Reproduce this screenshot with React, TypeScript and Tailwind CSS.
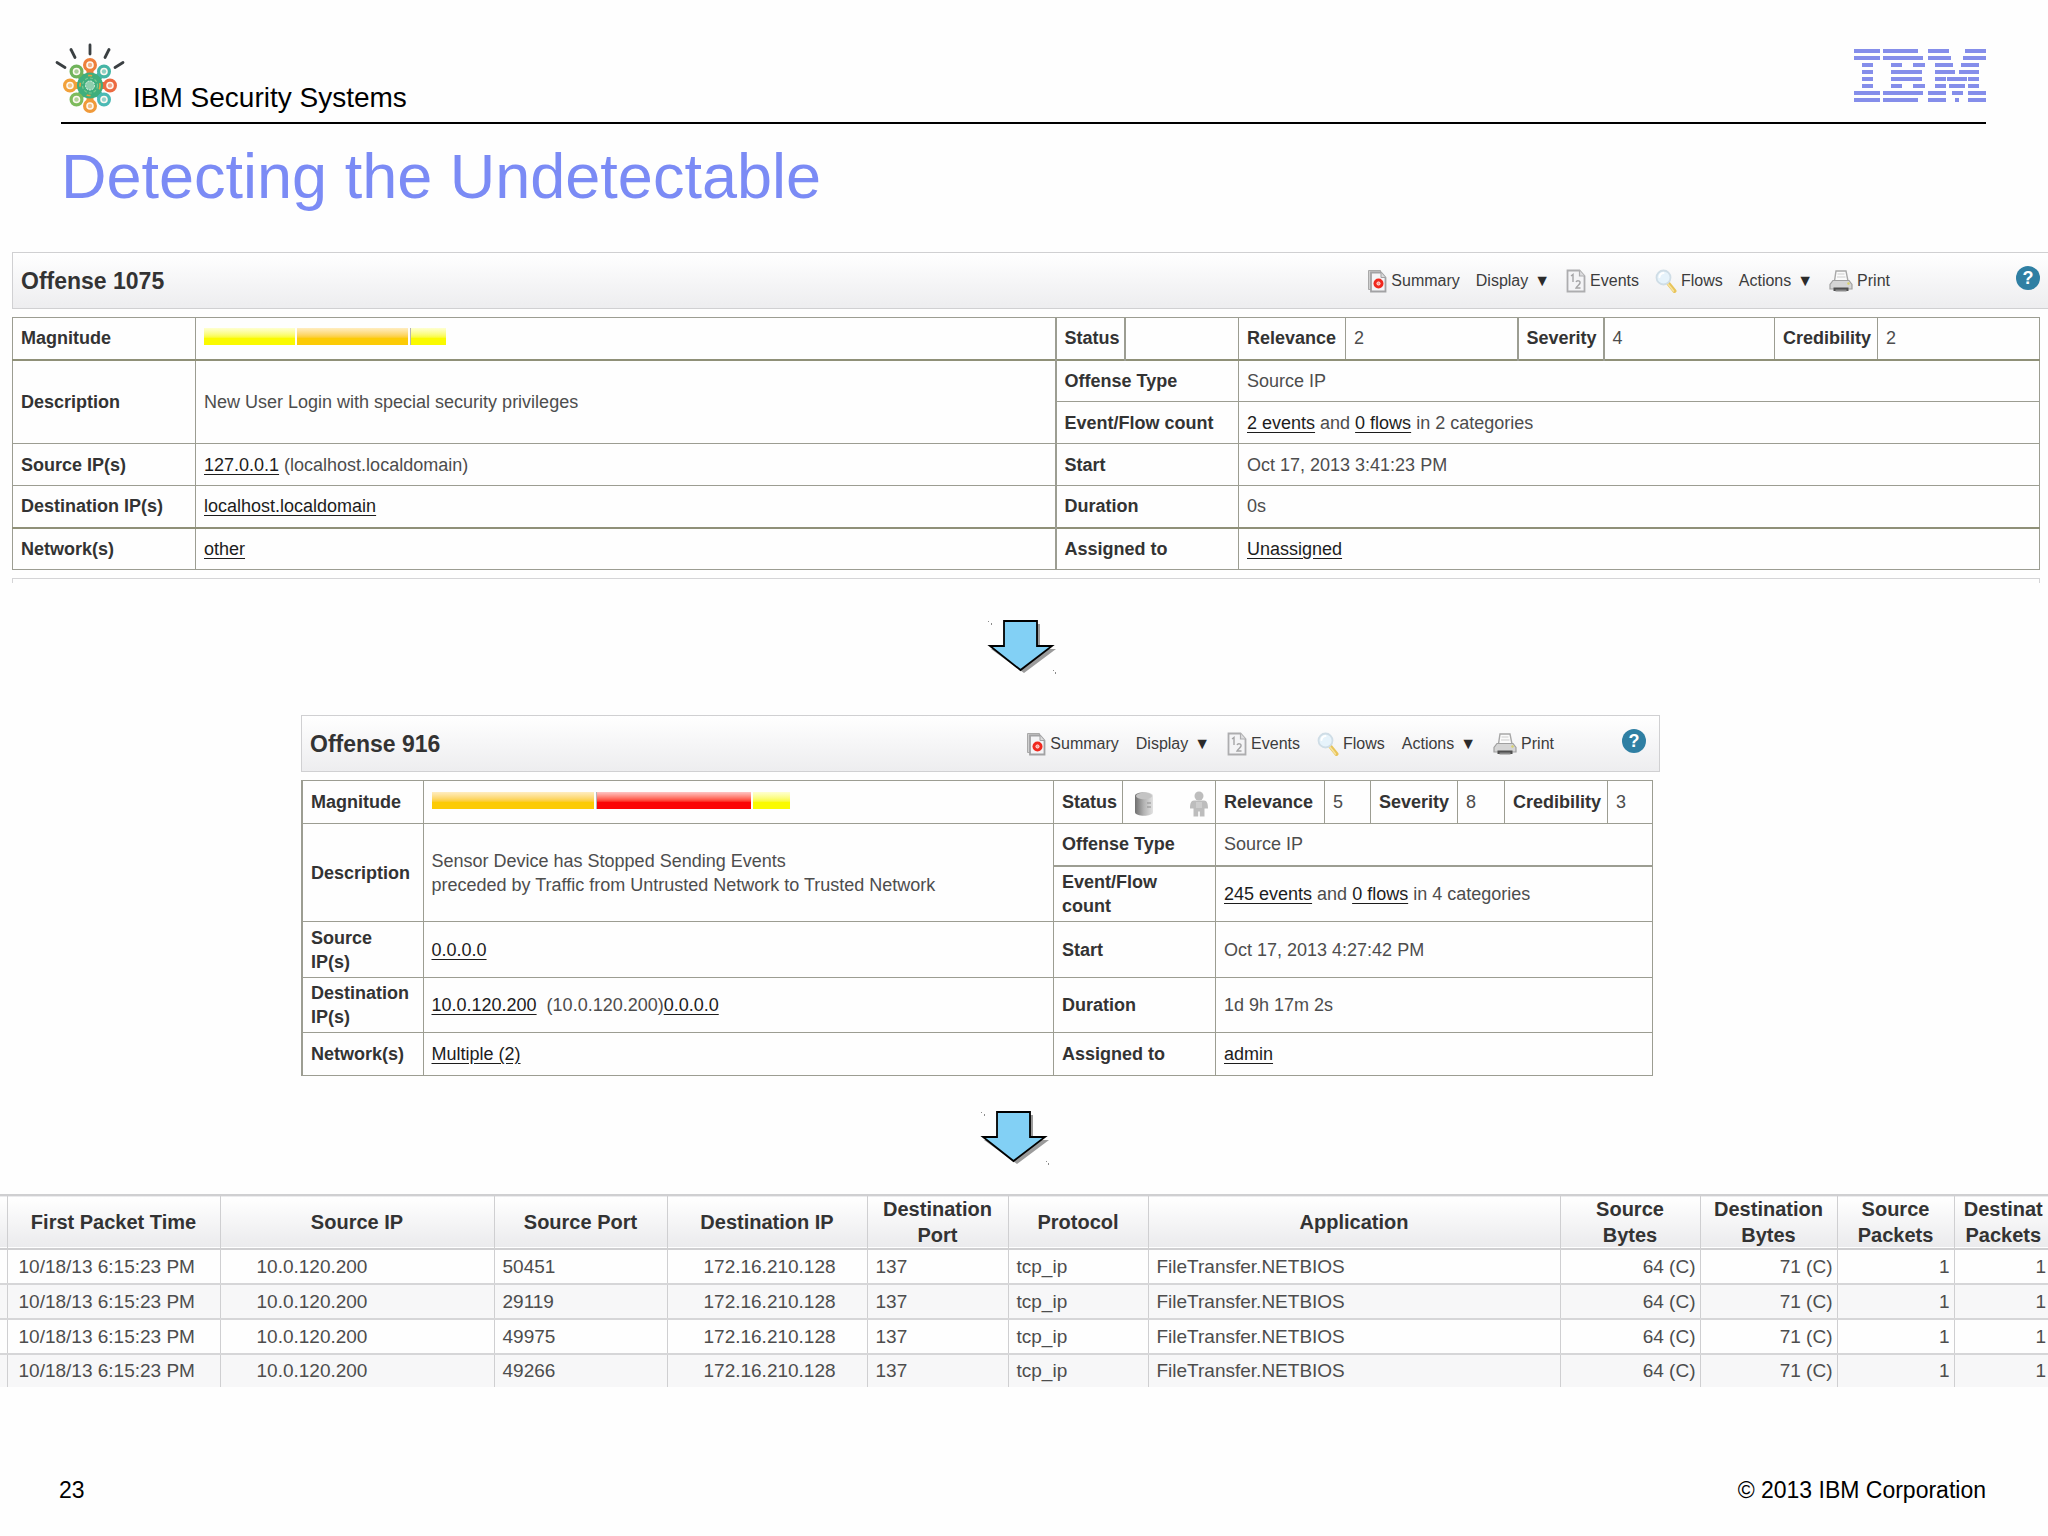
import React from "react";
import clsx from "clsx";

const SummaryIcon = () => (
  <svg width="20" height="24" viewBox="0 0 20 24" fill="none">
    <path d="M1.5 1.5h12v19h-12z" fill="#cfcfcf" stroke="#a9a9a9" />
    <path d="M4 3.5h10l4.5 5v14H4z" fill="#f4f4f6" stroke="#a2a2a4" strokeWidth="1.8" />
    <path d="M14 3.5v5h4.5" fill="#dcdcdc" stroke="#a2a2a4" />
    <circle cx="11.5" cy="14.5" r="5" fill="#f0281e" />
    <circle cx="11.5" cy="14.5" r="1.6" fill="#ff9a90" stroke="#fff" strokeWidth="0.8" />
  </svg>
);

const EventsIcon = () => (
  <svg width="20" height="24" viewBox="0 0 20 24" fill="none">
    <path d="M1.5 1.5h12l5 5.5v15.5h-17z" fill="#f4f4f6" stroke="#adadaf" strokeWidth="1.8" />
    <path d="M13.5 1.5v5.5h5" fill="#dedee0" stroke="#adadaf" strokeWidth="1.2" />
    <path d="M5 7l2-1.5v7.5" stroke="#a5a5a7" strokeWidth="1.4" />
    <path d="M10 13c1-2 4.500-1.500 4 1-.3 1.500-3 3-4 5h4.500" stroke="#a5a5a7" strokeWidth="1.4" />
  </svg>
);

const FlowsIcon = () => (
  <svg width="22" height="24" viewBox="0 0 22 24" fill="none">
    <path d="M13 14l6.5 8" stroke="#e8c45a" strokeWidth="4" strokeLinecap="round" />
    <path d="M12.5 14.5l6 7.5" stroke="#f7e3a0" strokeWidth="1.4" strokeLinecap="round" />
    <circle cx="8.5" cy="8.5" r="7" fill="#e6f3fb" stroke="#cfdde6" strokeWidth="1.8" />
    <path d="M4.5 8a4.5 4.5 0 0 1 4-4" stroke="#fff" strokeWidth="2" strokeLinecap="round" />
  </svg>
);

const PrintIcon = () => (
  <svg width="24" height="24" viewBox="0 0 24 24" fill="none">
    <path d="M7 2h10l2 10H5.5z" fill="#fbfbfb" stroke="#a8a8a8" strokeWidth="1.4" />
    <path d="M8.5 5h7M8 8h8.500" stroke="#cdcdcd" />
    <path d="M4 11.5h16l3 4v4.5H1v-4.5z" fill="#d5d5d5" stroke="#a0a0a0" strokeWidth="1.2" />
    <path d="M4.5 18.5h15v3.5h-15z" fill="#4f4f4f" />
    <path d="M6.5 20.5h11v2h-11z" fill="#8a8a8a" />
    <circle cx="19.5" cy="14.5" r="1.2" fill="#d9d36a" />
  </svg>
);

const DatabaseIcon = () => (
  <svg width="20" height="26" viewBox="0 0 20 26">
    <defs>
      <linearGradient id="cyl" x1="0" x2="1" y1="0" y2="0">
        <stop offset="0" stopColor="#6f6f6f" />
        <stop offset="0.5" stopColor="#b4b4b4" />
        <stop offset="1" stopColor="#e2e2e2" />
      </linearGradient>
    </defs>
    <path d="M1 5c0-5 18-5 18 0v16c0 5-18 5-18 0z" fill="url(#cyl)" />
    <ellipse cx="10" cy="5" rx="8" ry="3.2" fill="#c4c4c4" />
    <path d="M13 12h4M13 16h4" stroke="#8f8f8f" />
  </svg>
);

const PersonIcon = () => (
  <svg width="20" height="26" viewBox="0 0 20 26" fill="#bdbdbd">
    <circle cx="10" cy="5" r="4.5" />
    <path d="M5 9.5h10c3 0 4 3 4 8h-3.5v8h-4.700v-5h-1.600v5H4.500v-8H1c0-5 1-8 4-8z" />
    <path d="M7 11h6v6H7z" fill="#cdcdcd" />
  </svg>
);

const rays = [
  "M57 63.5l8 5",
  "M71 50.5l4 8",
  "M90 46v9",
  "M109 50.5l-4 8",
  "M123 63.5l-8 5",
];

const nodes = [
  { x: 90, y: 66, color: "#ee7f3b" },
  { x: 76.5, y: 72.5, color: "#6fb35a" },
  { x: 104, y: 72.5, color: "#45b5a5" },
  { x: 70, y: 86.5, color: "#f2a13a" },
  { x: 110, y: 86.5, color: "#ec6b42" },
  { x: 76.5, y: 100.5, color: "#7dbb5c" },
  { x: 104, y: 100.5, color: "#4bb9b4" },
  { x: 90, y: 107, color: "#f09a3a" },
];

const SecurityLogo = () => (
  <svg width="72" height="72" viewBox="54 43 72 72" fill="none">
    {rays.map((d) => (
      <path key={d} d={d} stroke="#3a3f42" strokeWidth="2.8" strokeLinecap="round" />
    ))}
    {nodes.map((n) => (
      <path
        key={`${n.x}-${n.y}`}
        d={`M90 86.5L${n.x} ${n.y}`}
        stroke={n.color}
        strokeWidth="7"
      />
    ))}
    <circle cx="90" cy="86.5" r="13" fill="#3fae7c" />
    <circle cx="90" cy="86.5" r="10" stroke="#e9a13c" strokeWidth="1.6" strokeDasharray="4 11" />
    <circle cx="90" cy="86.5" r="7.5" stroke="#7cc98f" strokeWidth="1.2" strokeDasharray="3 2" />
    <circle cx="90" cy="86.5" r="4.5" fill="#8fd0ae" stroke="#e3f5ec" strokeDasharray="2 1" />
    {nodes.map((n) => (
      <g key={`${n.x}-${n.y}`}>
        <circle cx={n.x} cy={n.y} r="5.4" fill="#fdf8f0" stroke={n.color} strokeWidth="3.2" />
        <circle cx={n.x} cy={n.y} r="2.2" fill={n.color} opacity="0.6" />
      </g>
    ))}
  </svg>
);

// [x, width] of every bar, one list per stripe
const stripes = [
  [[0, 26], [29, 35], [74, 21], [111, 21]],
  [[0, 26], [29, 40], [74, 23], [109, 23]],
  [[8, 11], [37, 11], [59, 12], [81, 18], [107, 18]],
  [[8, 11], [37, 31], [81, 20], [105, 20]],
  [[8, 11], [37, 31], [81, 11], [93, 20], [114, 11]],
  [[8, 11], [37, 11], [59, 12], [81, 11], [95, 16], [114, 11]],
  [[0, 26], [29, 40], [74, 18], [98, 11], [114, 18]],
  [[0, 26], [29, 35], [74, 18], [101, 4], [114, 18]],
];

const IbmLogo = () => (
  <svg width="132" height="54" viewBox="0 0 132 54" fill="#858eea" role="img" aria-label="IBM">
    {stripes.map((bars, row) =>
      bars.map(([x, w]) => (
        <rect key={`${row}-${x}`} x={x} y={row * 7} width={w} height="4" />
      ))
    )}
  </svg>
);

const DownArrow = () => (
  <svg width="70" height="56" viewBox="0 0 70 56">
    <path d="M20 5h33v25h16L37 54 4 30h16z" fill="#9b9b9b" />
    <path
      d="M17 2h33v25h15L33.5 51 3 27h14z"
      fill="#82d0f5"
      stroke="#000"
      strokeWidth="1.8"
    />
    <path d="M1 2h1v1H1zM4 4h1v2H4zM66 51h1v1h-1zM68 53h1v2h-1z" fill="#8c8c8c" />
  </svg>
);

const ToolbarButton = ({
  icon,
  label,
  menu,
}: {
  icon?: React.ReactNode;
  label: string;
  menu?: boolean;
}) => (
  <button type="button" className="flex items-center gap-1 text-[16px] leading-6 text-[#3c3c3c]">
    {icon}
    <span>{label}</span>
    {menu && <span className="pl-0.5 text-[#2b2b2b]">▼</span>}
  </button>
);

const OffenseHeader = ({ title, wide }: { title: string; wide?: boolean }) => (
  <div
    className={clsx(
      "flex h-[57px] items-center border-y border-l border-[#d0d0d2] bg-linear-to-b from-white to-[#ededef] pt-px pl-2",
      wide ? "pr-2" : "border-r pr-[13px]"
    )}
  >
    <h2 className="flex-1 text-[23px] font-bold text-[#333]">{title}</h2>
    <div className={clsx("flex items-center", wide ? "gap-4" : "gap-[17px]")}>
      <ToolbarButton icon={<SummaryIcon />} label="Summary" />
      <ToolbarButton label="Display" menu />
      <ToolbarButton icon={<EventsIcon />} label="Events" />
      <ToolbarButton icon={<FlowsIcon />} label="Flows" />
      <ToolbarButton label="Actions" menu />
      <ToolbarButton icon={<PrintIcon />} label="Print" />
    </div>
    <button
      type="button"
      aria-label="Help"
      className={clsx(
        "mb-1.5 size-6 rounded-full bg-[#2f7fa3] text-[18px] leading-6 font-bold text-white",
        wide ? "ml-[126px]" : "ml-[68px]"
      )}
    >
      ?
    </button>
  </div>
);

type Segment = { width: string; color: string };

const Magnitude = ({ segments }: { segments: Segment[] }) => (
  <div className="mb-1 flex h-[17px] gap-0.5">
    {segments.map((s, i) => (
      <div key={i} className={clsx("bg-linear-to-b to-60%", s.width, s.color)} />
    ))}
  </div>
);

const Label = ({
  className,
  ...props
}: React.ThHTMLAttributes<HTMLTableCellElement>) => (
  <th
    scope="row"
    className={clsx("border border-[#9c9d92] pl-2 text-left font-bold text-[#333]", className)}
    {...props}
  />
);

const Value = ({
  className,
  ...props
}: React.TdHTMLAttributes<HTMLTableCellElement>) => (
  <td className={clsx("border border-[#9c9d92] pl-2 text-[#4d4d4d]", className)} {...props} />
);

const Link = ({ children }: { children: React.ReactNode }) => (
  <a href="#" className="text-[#1c1c1c] underline underline-offset-3">
    {children}
  </a>
);

const flowRows = ["50451", "29119", "49975", "49266"];

const flowHeads = [
  "",
  "First Packet Time",
  "Source IP",
  "Source Port",
  "Destination IP",
  "Destination Port",
  "Protocol",
  "Application",
  "Source Bytes",
  "Destination Bytes",
  "Source Packets",
  "Destinat Packets",
];

const FlowCell = ({
  className,
  children,
}: {
  className?: string;
  children?: React.ReactNode;
}) => <td className={clsx("border-r border-[#cfcfd1] last:border-r-0", className)}>{children}</td>;

const App: React.FC = () => {
  return (
    <div className="flex min-h-screen flex-col overflow-x-hidden bg-[#fefefe] font-['Liberation_Sans',Arial,sans-serif] text-black">
      {/* Slide header */}
      <header className="flex items-end gap-[7px] pt-[42px] pr-[62px] pb-2 pl-[54px]">
        <SecurityLogo />
        <span className="flex-1 text-[28px] leading-8">IBM Security Systems</span>
        <div className="mt-[7px] self-start">
          <IbmLogo />
        </div>
      </header>
      <hr className="mr-[62px] ml-[61px] border-t-2 border-black" />
      <h1 className="mt-4 pl-[61px] text-[63px] leading-[72px] text-[#7b8bf5]">
        Detecting the Undetectable
      </h1>

      {/* Offense 1075 */}
      <section className="mt-10 pl-3">
        <OffenseHeader title="Offense 1075" wide />
        <div className="mt-2 pr-2">
          <table className="w-full table-fixed border-collapse text-[18px] leading-6">
            <colgroup>
              <col className="w-[183px]" />
              <col />
              <col className="w-[69px]" />
              <col className="w-[114px]" />
              <col className="w-[107px]" />
              <col className="w-[172px]" />
              <col className="w-[86px]" />
              <col className="w-[171px]" />
              <col className="w-[103px]" />
              <col className="w-[162px]" />
            </colgroup>
            <tbody>
              <tr className="h-[42px] border-b-2 border-[#8f9078]">
                <Label>Magnitude</Label>
                <Value>
                  <Magnitude
                    segments={[
                      { width: "w-[91px]", color: "from-[#ffffd0] to-[#fafa00]" },
                      { width: "w-[111px]", color: "from-[#ffedc0] to-[#fccb05]" },
                      { width: "w-[36px] border-l border-[#b5b5b5]", color: "from-[#ffffd0] to-[#fafa00]" },
                    ]}
                  />
                </Value>
                <Label className="border-x-2">Status</Label>
                <Value />
                <Label>Relevance</Label>
                <Value>2</Value>
                <Label className="border-x-2">Severity</Label>
                <Value>4</Value>
                <Label>Credibility</Label>
                <Value>2</Value>
              </tr>
              <tr className="h-[42px]">
                <Label rowSpan={2}>Description</Label>
                <Value rowSpan={2}>New User Login with special security privileges</Value>
                <Label colSpan={2} className="border-l-2">Offense Type</Label>
                <Value colSpan={6}>Source IP</Value>
              </tr>
              <tr className="h-[42px]">
                <Label colSpan={2} className="border-l-2">Event/Flow count</Label>
                <Value colSpan={6}>
                  <Link>2 events</Link> and <Link>0 flows</Link> in 2 categories
                </Value>
              </tr>
              <tr className="h-[42px]">
                <Label>Source IP(s)</Label>
                <Value>
                  <Link>127.0.0.1</Link> (localhost.localdomain)
                </Value>
                <Label colSpan={2} className="border-l-2">Start</Label>
                <Value colSpan={6}>Oct 17, 2013 3:41:23 PM</Value>
              </tr>
              <tr className="h-[42px] border-b-2 border-[#8f9078]">
                <Label>Destination IP(s)</Label>
                <Value>
                  <Link>localhost.localdomain</Link>
                </Value>
                <Label colSpan={2} className="border-l-2">Duration</Label>
                <Value colSpan={6}>0s</Value>
              </tr>
              <tr className="h-[42px]">
                <Label>Network(s)</Label>
                <Value>
                  <Link>other</Link>
                </Value>
                <Label colSpan={2} className="border-l-2">Assigned to</Label>
                <Value colSpan={6}>
                  <Link>Unassigned</Link>
                </Value>
              </tr>
            </tbody>
          </table>
          <div className="mt-2 h-[5px] border-x border-t border-[#d4d4d6]" />
        </div>
      </section>

      <div className="mt-9 flex justify-center pr-1">
        <DownArrow />
      </div>

      {/* Offense 916 */}
      <section className="mt-10 pr-[388px] pl-[301px]">
        <OffenseHeader title="Offense 916" />
        <div className="mt-2 pr-[7px]">
          <table className="w-full table-fixed border-collapse text-[18px] leading-6">
            <colgroup>
              <col className="w-[121px]" />
              <col />
              <col className="w-[69px]" />
              <col className="w-[93px]" />
              <col className="w-[109px]" />
              <col className="w-[46px]" />
              <col className="w-[87px]" />
              <col className="w-[47px]" />
              <col className="w-[103px]" />
              <col className="w-[45px]" />
            </colgroup>
            <tbody>
              <tr className="h-[43px]">
                <Label className="border-l-2">Magnitude</Label>
                <Value>
                  <Magnitude
                    segments={[
                      { width: "w-[162px]", color: "from-[#ffedc0] to-[#fccb05]" },
                      { width: "w-[155px] border-l border-[#b5b5b5]", color: "from-[#ffc4c4] to-[#fb0505]" },
                      { width: "w-[37px]", color: "from-[#ffffd0] to-[#fafa00]" },
                    ]}
                  />
                </Value>
                <Label>Status</Label>
                <Value>
                  <div className="flex items-center justify-between pt-1 pr-[6px] pl-[3px]">
                    <DatabaseIcon />
                    <PersonIcon />
                  </div>
                </Value>
                <Label>Relevance</Label>
                <Value>5</Value>
                <Label>Severity</Label>
                <Value>8</Value>
                <Label>Credibility</Label>
                <Value>3</Value>
              </tr>
              <tr className="h-[42px]">
                <Label rowSpan={2} className="border-l-2">Description</Label>
                <Value rowSpan={2}>
                  Sensor Device has Stopped Sending Events
                  <br />
                  preceded by Traffic from Untrusted Network to Trusted Network
                </Value>
                <Label colSpan={2} className="border-b-2">Offense Type</Label>
                <Value colSpan={6} className="border-b-2">Source IP</Value>
              </tr>
              <tr className="h-[56px]">
                <Label colSpan={2}>
                  Event/Flow
                  <br />
                  count
                </Label>
                <Value colSpan={6}>
                  <Link>245 events</Link> and <Link>0 flows</Link> in 4 categories
                </Value>
              </tr>
              <tr className="h-[56px]">
                <Label className="border-l-2">
                  Source
                  <br />
                  IP(s)
                </Label>
                <Value>
                  <Link>0.0.0.0</Link>
                </Value>
                <Label colSpan={2}>Start</Label>
                <Value colSpan={6}>Oct 17, 2013 4:27:42 PM</Value>
              </tr>
              <tr className="h-[55px]">
                <Label className="border-l-2">
                  Destination
                  <br />
                  IP(s)
                </Label>
                <Value>
                  <Link>10.0.120.200</Link>&nbsp; (10.0.120.200)<Link>0.0.0.0</Link>
                </Value>
                <Label colSpan={2}>Duration</Label>
                <Value colSpan={6}>1d 9h 17m 2s</Value>
              </tr>
              <tr className="h-[43px]">
                <Label className="border-l-2">Network(s)</Label>
                <Value>
                  <Link>Multiple (2)</Link>
                </Value>
                <Label colSpan={2}>Assigned to</Label>
                <Value colSpan={6}>
                  <Link>admin</Link>
                </Value>
              </tr>
            </tbody>
          </table>
        </div>
      </section>

      <div className="mt-[34px] flex justify-center pr-[18px]">
        <DownArrow />
      </div>

      {/* Flow list */}
      <table className="mt-7 w-full table-fixed border-collapse text-[19px] leading-6 text-[#4d4d4d]">
        <colgroup>
          <col className="w-[7px]" />
          <col className="w-[213px]" />
          <col className="w-[274px]" />
          <col className="w-[173px]" />
          <col className="w-[200px]" />
          <col className="w-[141px]" />
          <col className="w-[140px]" />
          <col />
          <col className="w-[140px]" />
          <col className="w-[137px]" />
          <col className="w-[117px]" />
          <col className="w-[94px]" />
        </colgroup>
        <thead>
          <tr className="h-[53px] border-t-2 border-b-2 border-[#cfcfd1] bg-linear-to-b from-white to-[#ebebed] text-[20px] leading-[26px] text-[#333]">
            {flowHeads.map((head, idx) => (
              <th
                key={idx}
                scope="col"
                className="border-r border-[#cfcfd1] px-2 py-0 font-bold first:px-0 last:border-r-0 last:pr-1"
              >
                {head}
              </th>
            ))}
          </tr>
        </thead>
        <tbody>
          {flowRows.map((port) => (
            <tr
              key={port}
              className="h-[35px] border-b-2 border-[#d6d6d8] last:h-[33px] last:border-b-0 even:bg-[#f7f7f8]"
            >
              <FlowCell />
              <FlowCell className="pl-[11px]">10/18/13 6:15:23 PM</FlowCell>
              <FlowCell className="pl-9">10.0.120.200</FlowCell>
              <FlowCell className="pl-2">{port}</FlowCell>
              <FlowCell className="pl-9">172.16.210.128</FlowCell>
              <FlowCell className="pl-2">137</FlowCell>
              <FlowCell className="pl-2">tcp_ip</FlowCell>
              <FlowCell className="pl-2">FileTransfer.NETBIOS</FlowCell>
              <FlowCell className="pr-1 text-right">64 (C)</FlowCell>
              <FlowCell className="pr-1 text-right">71 (C)</FlowCell>
              <FlowCell className="pr-1 text-right">1</FlowCell>
              <FlowCell className="pr-0.5 text-right">1</FlowCell>
            </tr>
          ))}
        </tbody>
      </table>

      <footer className="mt-auto flex justify-between pr-[62px] pb-8 pl-[59px] text-[23px] leading-7">
        <span>23</span>
        <span>© 2013 IBM Corporation</span>
      </footer>
    </div>
  );
};

export default App;
